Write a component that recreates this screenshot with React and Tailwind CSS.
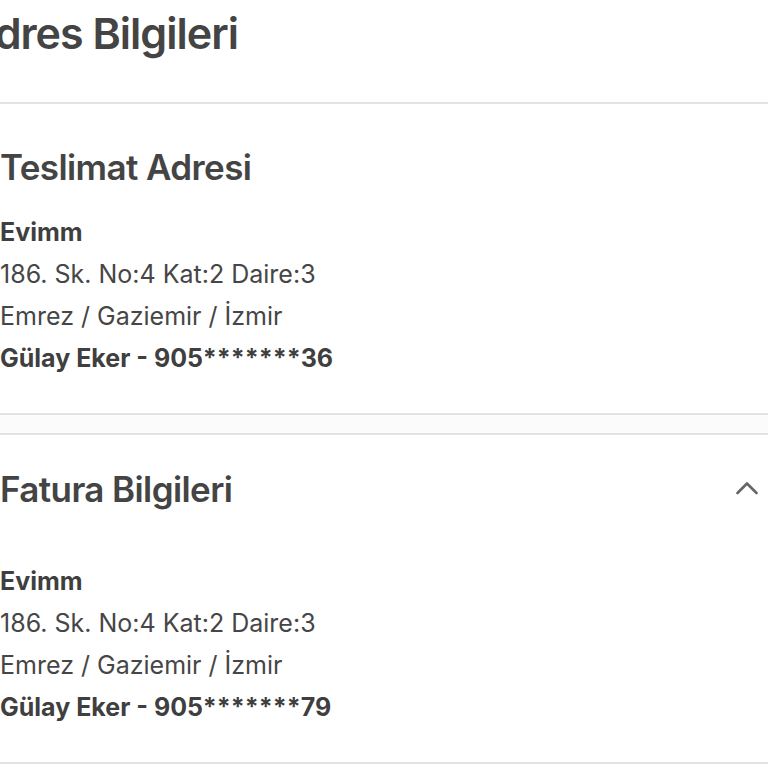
export default function App() {
  const sections = [
    {
      title: "Teslimat Adresi",
      phone: "Gülay Eker - 905*******36",
      top: "pt-[41px]",
      gap: "mt-[22px]",
      toggle: false,
    },
    {
      title: "Fatura Bilgileri",
      phone: "Gülay Eker - 905*******79",
      top: "pt-[32px]",
      gap: "mt-[49px]",
      toggle: true,
    },
  ];

  return (
    <div
      className="w-[768px] h-[768px] overflow-hidden bg-white text-[#464646]"
      style={{ fontFamily: "Inter, 'Noto Sans', sans-serif" }}
    >
      <div className="h-[104px] border-b-2 border-[#e3e3e3] pt-[5px] overflow-hidden">
        <h1 className="ml-[-35px] text-[43px] leading-[56px] font-semibold text-[#444] whitespace-nowrap tracking-[-1px]">
          Adres Bilgileri
        </h1>
      </div>

      {sections.map((s, i) => (
        <div key={s.title}>
          {i > 0 && (
            <div className="h-[20px] bg-[#fbfbfb] border-b-2 border-[#e3e3e3]" />
          )}
          <section className={`${s.top} pb-[34px] border-b-2 border-[#e3e3e3]`}>
            <div className="flex items-center justify-between pr-[10px]">
              <h2 className="text-[35px] leading-[44px] font-semibold text-[#444] tracking-[-0.6px]">
                {s.title}
              </h2>
              {s.toggle && (
                <svg width="22" height="14" viewBox="0 0 22 14" className="mt-[-2px]">
                  <polyline
                    points="1.5,12 11,2.5 20.5,12"
                    fill="none"
                    stroke="#666"
                    strokeWidth="2.6"
                    strokeLinecap="round"
                    strokeLinejoin="round"
                  />
                </svg>
              )}
            </div>
            <div className={`${s.gap} text-[25px] leading-[42px]`}>
              <p className="font-bold text-[#3f3f3f]">Evimm</p>
              <p>186. Sk. No:4 Kat:2 Daire:3</p>
              <p>Emrez / Gaziemir / İzmir</p>
              <p className="font-bold text-[#3f3f3f]">{s.phone}</p>
            </div>
          </section>
        </div>
      ))}
    </div>
  );
}
